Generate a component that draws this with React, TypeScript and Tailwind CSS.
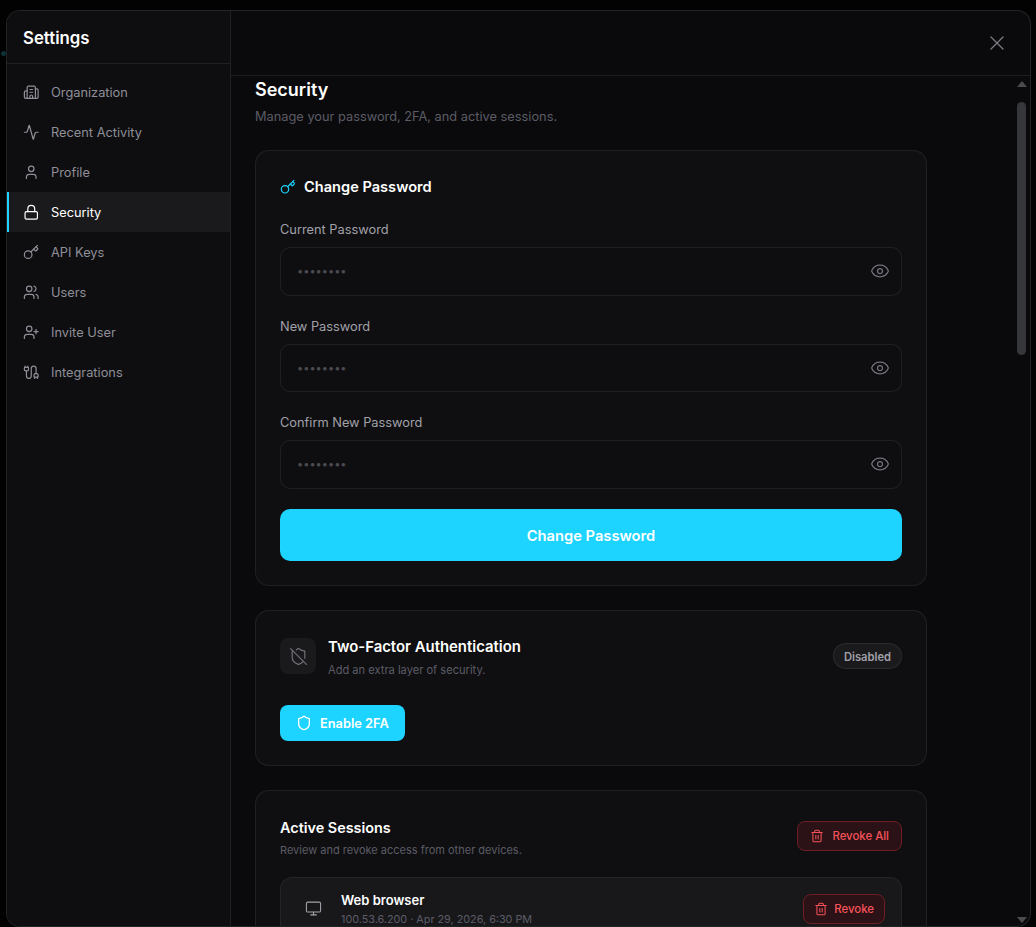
import { Activity, Building2, Cable, Eye, Key, Lock, Monitor, Shield, ShieldOff, Trash2, User, UserPlus, Users, X } from "lucide-react";

const navItems = [
  { label: "Organization", icon: Building2 },
  { label: "Recent Activity", icon: Activity },
  { label: "Profile", icon: User },
  { label: "Security", icon: Lock, active: true },
  { label: "API Keys", icon: Key },
  { label: "Users", icon: Users },
  { label: "Invite User", icon: UserPlus },
  { label: "Integrations", icon: Cable },
];

const PasswordField = ({ label }: { label: string }) => (
  <div>
    <label className="block text-[12.8px] leading-[22px] text-[#a1a1aa] mb-[6px]">{label}</label>
    <div className="relative">
      <input
        type="password"
        readOnly
        placeholder="••••••••"
        className="w-full h-[48.5px] rounded-[10px] border border-white/[0.07] bg-[#0e0e11] px-4 text-[11px] outline-none placeholder:text-[#4b4b52]"
      />
      <Eye size={20} strokeWidth={1.5} className="absolute right-[12px] top-[14px] text-[#71717a]" />
    </div>
  </div>
);

export default function App() {
  return (
    <div className="relative w-[1036px] h-[927px] overflow-hidden bg-[#020203] pt-[10px] pl-[6px] pr-[5px] font-['Inter',sans-serif]">
      {/* Page behind the dialog, barely visible at its edge */}
      <div className="absolute left-[1px] top-[51px] h-[5px] w-[5px] rounded-full bg-[#0b3336]" />

      <div className="relative flex h-[917px] overflow-hidden rounded-[14px] border border-white/[0.1] bg-[#0a0a0c]">
        {/* Sidebar */}
        <aside className="w-[224px] shrink-0 border-r border-white/[0.08] bg-[#0e0e10]">
          <div className="flex h-[53px] items-center border-b border-white/[0.08] pl-4 pt-[4px]">
            <h1 className="text-[16.8px] font-semibold text-white">Settings</h1>
          </div>
          <nav className="pt-2">
            {navItems.map((item) => {
              const Icon = item.icon;
              return (
                <div
                  key={item.label}
                  className={
                    item.active
                      ? "flex h-10 items-center gap-[11.5px] border-l-2 border-[#1dd3ff] bg-[#1a1a1d] pl-[14px] text-[12.8px] text-white"
                      : "flex h-10 items-center gap-[11.5px] border-l-2 border-transparent pl-[14px] text-[12.8px] text-[#8f8f98]"
                  }
                >
                  <Icon size={16.5} strokeWidth={1.75} />
                  <span className="pt-[2px]">{item.label}</span>
                </div>
              );
            })}
          </nav>
        </aside>

        {/* Main */}
        <main className="flex min-w-0 flex-1 flex-col">
          <div className="flex h-[65px] shrink-0 items-center justify-end border-b border-white/[0.08] pr-[21px]">
            <X size={24} strokeWidth={1.25} className="text-[#7c7c84]" />
          </div>
          <div className="flex min-h-0 flex-1">
            <div className="min-w-0 flex-1 overflow-hidden pl-6 pt-[1px]">
              <h2 className="text-[18px] leading-[26px] font-semibold text-white">Security</h2>
              <p className="mt-[3px] text-[12.8px] leading-[22px] text-[#5c5c66]">Manage your password, 2FA, and active sessions.</p>

              <section className="mt-[22px] w-[672px] rounded-[14px] border border-white/[0.07] bg-[#0f0f11] p-6">
                <div className="flex h-6 items-center gap-2 text-[14.6px] font-semibold text-white">
                  <Key size={16} strokeWidth={1.75} className="text-[#1dd3ff]" />
                  <span className="pt-[2px]">Change Password</span>
                </div>
                <div className="mt-5 flex flex-col gap-5">
                  <PasswordField label="Current Password" />
                  <PasswordField label="New Password" />
                  <PasswordField label="Confirm New Password" />
                  <button className="h-[52px] w-full rounded-[10px] bg-[#1dd3ff] pt-[3px] text-[14.7px] font-semibold text-white">Change Password</button>
                </div>
              </section>

              <section className="mt-6 w-[672px] rounded-[14px] border border-white/[0.07] bg-[#0f0f11] p-6">
                <div className="flex h-[43px] items-center justify-between">
                  <div className="flex items-center gap-3">
                    <div className="flex h-9 w-9 items-center justify-center rounded-lg bg-[#1a1a1d]">
                      <ShieldOff size={19} strokeWidth={1.5} className="text-[#71717a]" />
                    </div>
                    <div className="self-start">
                      <div className="text-[14.9px] leading-[26px] font-semibold text-white">Two-Factor Authentication</div>
                      <div className="mt-[2px] text-[11.1px] leading-4 text-[#5c5c66]">Add an extra layer of security.</div>
                    </div>
                  </div>
                  <span className="flex h-[26px] items-center rounded-full border border-white/[0.08] bg-[#1a1a1d] px-[10px] pt-[2px] text-[11.2px] font-semibold text-[#a1a1aa]">Disabled</span>
                </div>
                <button className="mt-[27px] flex h-9 items-center gap-2 rounded-lg bg-[#1dd3ff] px-4 text-[12.8px] font-semibold text-white">
                  <Shield size={16} strokeWidth={2} />
                  <span className="pt-[2px]">Enable 2FA</span>
                </button>
              </section>

              <section className="mt-6 w-[672px] rounded-[14px] border border-white/[0.07] bg-[#0f0f11] p-6">
                <div className="flex items-start justify-between">
                  <div>
                    <div className="text-[14.4px] leading-[26px] font-semibold text-white">Active Sessions</div>
                    <div className="mt-[1px] text-[11px] leading-4 text-[#5c5c66]">Review and revoke access from other devices.</div>
                  </div>
                  <button className="mt-[6px] flex h-[30px] items-center gap-2 rounded-lg border border-[#6f1d23] bg-[#2a1216] px-3 text-[11.4px] font-medium text-[#f8525a]">
                    <Trash2 size={14} strokeWidth={1.75} />
                    <span className="pt-[3px]">Revoke All</span>
                  </button>
                </div>
                <div className="mt-[19px] flex items-center justify-between rounded-xl border border-white/[0.05] bg-[#18181b] px-4 py-3">
                  <div className="flex items-center gap-3">
                    <div className="flex h-8 w-8 items-center justify-center text-[#a1a1aa]">
                      <Monitor size={17} strokeWidth={1.5} />
                    </div>
                    <div>
                      <div className="text-[13px] leading-5 font-semibold text-white">Web browser</div>
                      <div className="mt-[2px] text-[10.8px] leading-4 text-[#5c5c66]">100.53.6.200 · Apr 29, 2026, 6:30 PM</div>
                    </div>
                  </div>
                  <button className="flex h-[30px] items-center gap-[6px] rounded-lg border border-[#6f1d23] bg-[#2a1216] px-[10px] text-[11.4px] font-medium text-[#f8525a]">
                    <Trash2 size={14} strokeWidth={1.75} />
                    <span className="pt-[3px]">Revoke</span>
                  </button>
                </div>
              </section>
            </div>

            {/* Scrollbar */}
            <div className="flex w-[16px] shrink-0 flex-col items-center pr-[1px] pt-[5px] pb-[3px]">
              <svg width="10" height="6" viewBox="0 0 10 6" className="fill-[#4b4b50]"><path d="M5 0l5 6H0z" /></svg>
              <div className="mt-[15px] h-[253px] w-[9px] rounded-full bg-[#36373b]" />
              <svg width="10" height="6" viewBox="0 0 10 6" className="mt-auto fill-[#4b4b50]"><path d="M5 6L0 0h10z" /></svg>
            </div>
          </div>
        </main>
      </div>
    </div>
  );
}
